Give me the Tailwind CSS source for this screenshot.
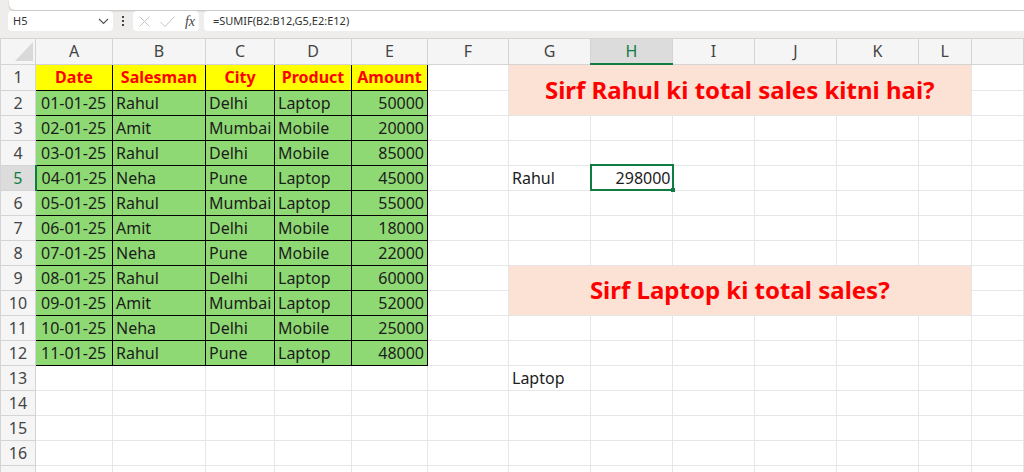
<!doctype html>
<html>
<head>
<meta charset="utf-8">
<title>SUMIF</title>
<script src="https://cdn.jsdelivr.net/npm/@tailwindcss/browser@4"></script>
</head>
<body class="h-[472px] overflow-hidden bg-[#efedeb] font-['Noto_Sans',sans-serif] text-[#1c1c1c]">

<!-- ribbon edge -->
<div class="ml-[9px] h-[10px] rounded-bl-md bg-white shadow-[0_1px_2px_rgba(0,0,0,0.2)]"></div>

<!-- formula bar -->
<div class="mt-[1px] flex h-[20px] items-stretch pl-[8px]">
    <div class="flex w-[105px] items-center justify-between rounded bg-white pl-[5px] pr-[4px] text-[11px] text-[#333]">
        <span>H5</span>
        <svg class="w-[11px] h-[7px]" viewBox="0 0 11 7" fill="none" stroke="#555" stroke-width="1.2"><path d="M1 1l4.5 4.5L10 1"/></svg>
    </div>
    <div class="flex w-[20px] flex-col items-center justify-center gap-[2px]">
        <span class="h-[2px] w-[2px] bg-[#444]"></span>
        <span class="h-[2px] w-[2px] bg-[#444]"></span>
        <span class="h-[2px] w-[2px] bg-[#444]"></span>
    </div>
    <div class="flex w-[66px] items-center justify-between rounded bg-white pl-[6px] pr-[4px]">
        <svg class="w-[11px] h-[11px]" viewBox="0 0 11 11" fill="none" stroke="#c4c4c4" stroke-width="1"><path d="M0.5 0.5l10 10M10.5 0.5l-10 10"/></svg>
        <svg class="w-[15px] h-[11px]" viewBox="0 0 15 11" fill="none" stroke="#c4c4c4" stroke-width="1"><path d="M0.5 6l4.5 4.5L14.5 0.5"/></svg>
        <span class="font-['Liberation_Serif',serif] text-[14px] italic text-[#444]">fx</span>
    </div>
    <div class="ml-[5px] flex flex-1 items-center rounded-l bg-white pl-[9px] text-[11px] text-[#333]">=SUMIF(B2:B12,G5,E2:E12)</div>
</div>
<div class="h-[7px]"></div>

<!-- sheet -->
<table class="w-[1024px] table-fixed border-collapse bg-white text-[16px] [&_td]:border [&_td]:border-[#e6e6e6] [&_td]:p-0 [&_td]:leading-none [&_th]:border [&_th]:border-[#d4d4d4] [&_th]:bg-[#f5f5f5] [&_th]:font-normal [&_th]:text-[#444] [&_th]:p-0">
    <colgroup>
        <col class="w-[35px]"><col class="w-[77px]"><col class="w-[93px]"><col class="w-[69px]"><col class="w-[77px]"><col class="w-[76px]"><col class="w-[81px]"><col class="w-[82px]"><col class="w-[82px]"><col class="w-[82px]"><col class="w-[82px]"><col class="w-[82px]"><col>
    </colgroup>
    <thead>
        <tr class="h-[25px]">
            <th><svg class="ml-[14px] w-[18px] h-[19px]" viewBox="0 0 18 19"><path d="M18 0v19H0z" fill="#d9d9d9"/></svg></th>
            <th>A</th><th>B</th><th>C</th><th>D</th><th>E</th><th>F</th><th>G</th>
            <th class="bg-[#dcdcdc]! text-[#107c41]! border-b-2! border-b-[#107c41]!">H</th>
            <th>I</th><th>J</th><th>K</th><th>L</th><th></th>
        </tr>
    </thead>
    <tbody>
        <tr class="h-[26px]">
            <th>1</th>
            <td class="border-black! bg-[#ffff00] text-center font-bold text-[#ff0000]">Date</td>
            <td class="border-black! bg-[#ffff00] text-center font-bold text-[#ff0000]">Salesman</td>
            <td class="border-black! bg-[#ffff00] text-center font-bold text-[#ff0000]">City</td>
            <td class="border-black! bg-[#ffff00] text-center font-bold text-[#ff0000]">Product</td>
            <td class="border-black! bg-[#ffff00] text-center font-bold text-[#ff0000]">Amount</td>
            <td></td>
            <td colspan="6" rowspan="2" class="border-0! bg-[#fbe2d5] text-center text-[24px] font-bold text-[#ff0000]">Sirf Rahul ki total sales kitni hai?</td>
            <td></td>
        </tr>
        <tr class="h-[24.9px]">
            <th>2</th>
            <td class="border-black! bg-[#8ed973] pl-[5px]!">01-01-25</td>
            <td class="border-black! bg-[#8ed973] pl-[3px]!">Rahul</td>
            <td class="border-black! bg-[#8ed973] pl-[3px]!">Delhi</td>
            <td class="border-black! bg-[#8ed973] pl-[3px]!">Laptop</td>
            <td class="border-black! bg-[#8ed973] pr-[3px]! text-right">50000</td>
            <td></td><td></td>
        </tr>
        <tr class="h-[24.9px]">
            <th>3</th>
            <td class="border-black! bg-[#8ed973] pl-[5px]!">02-01-25</td>
            <td class="border-black! bg-[#8ed973] pl-[3px]!">Amit</td>
            <td class="border-black! bg-[#8ed973] pl-[3px]!">Mumbai</td>
            <td class="border-black! bg-[#8ed973] pl-[3px]!">Mobile</td>
            <td class="border-black! bg-[#8ed973] pr-[3px]! text-right">20000</td>
            <td></td><td></td><td></td><td></td><td></td><td></td><td></td><td></td>
        </tr>
        <tr class="h-[24.9px]">
            <th>4</th>
            <td class="border-black! bg-[#8ed973] pl-[5px]!">03-01-25</td>
            <td class="border-black! bg-[#8ed973] pl-[3px]!">Rahul</td>
            <td class="border-black! bg-[#8ed973] pl-[3px]!">Delhi</td>
            <td class="border-black! bg-[#8ed973] pl-[3px]!">Mobile</td>
            <td class="border-black! bg-[#8ed973] pr-[3px]! text-right">85000</td>
            <td></td><td></td><td></td><td></td><td></td><td></td><td></td><td></td>
        </tr>
        <tr class="h-[24.9px]">
            <th class="bg-[#dcdcdc]! text-[#107c41]! border-r-2! border-r-[#107c41]!">5</th>
            <td class="border-black! bg-[#8ed973] pl-[5px]!">04-01-25</td>
            <td class="border-black! bg-[#8ed973] pl-[3px]!">Neha</td>
            <td class="border-black! bg-[#8ed973] pl-[3px]!">Pune</td>
            <td class="border-black! bg-[#8ed973] pl-[3px]!">Laptop</td>
            <td class="border-black! bg-[#8ed973] pr-[3px]! text-right">45000</td>
            <td></td>
            <td class="pl-[3px]!">Rahul</td>
            <td class="relative border-2! border-[#107c41]! pr-[1px]! text-right">298000<span class="absolute -right-[3px] -bottom-[3px] h-[4px] w-[4px] bg-[#107c41]"></span></td>
            <td></td><td></td><td></td><td></td><td></td>
        </tr>
        <tr class="h-[24.9px]">
            <th>6</th>
            <td class="border-black! bg-[#8ed973] pl-[5px]!">05-01-25</td>
            <td class="border-black! bg-[#8ed973] pl-[3px]!">Rahul</td>
            <td class="border-black! bg-[#8ed973] pl-[3px]!">Mumbai</td>
            <td class="border-black! bg-[#8ed973] pl-[3px]!">Laptop</td>
            <td class="border-black! bg-[#8ed973] pr-[3px]! text-right">55000</td>
            <td></td><td></td><td></td><td></td><td></td><td></td><td></td><td></td>
        </tr>
        <tr class="h-[24.9px]">
            <th>7</th>
            <td class="border-black! bg-[#8ed973] pl-[5px]!">06-01-25</td>
            <td class="border-black! bg-[#8ed973] pl-[3px]!">Amit</td>
            <td class="border-black! bg-[#8ed973] pl-[3px]!">Delhi</td>
            <td class="border-black! bg-[#8ed973] pl-[3px]!">Mobile</td>
            <td class="border-black! bg-[#8ed973] pr-[3px]! text-right">18000</td>
            <td></td><td></td><td></td><td></td><td></td><td></td><td></td><td></td>
        </tr>
        <tr class="h-[24.9px]">
            <th>8</th>
            <td class="border-black! bg-[#8ed973] pl-[5px]!">07-01-25</td>
            <td class="border-black! bg-[#8ed973] pl-[3px]!">Neha</td>
            <td class="border-black! bg-[#8ed973] pl-[3px]!">Pune</td>
            <td class="border-black! bg-[#8ed973] pl-[3px]!">Mobile</td>
            <td class="border-black! bg-[#8ed973] pr-[3px]! text-right">22000</td>
            <td></td><td></td><td></td><td></td><td></td><td></td><td></td><td></td>
        </tr>
        <tr class="h-[24.9px]">
            <th>9</th>
            <td class="border-black! bg-[#8ed973] pl-[5px]!">08-01-25</td>
            <td class="border-black! bg-[#8ed973] pl-[3px]!">Rahul</td>
            <td class="border-black! bg-[#8ed973] pl-[3px]!">Delhi</td>
            <td class="border-black! bg-[#8ed973] pl-[3px]!">Laptop</td>
            <td class="border-black! bg-[#8ed973] pr-[3px]! text-right">60000</td>
            <td></td>
            <td colspan="6" rowspan="2" class="border-0! bg-[#fbe2d5] text-center text-[24px] font-bold text-[#ff0000]">Sirf Laptop ki total sales?</td>
            <td></td>
        </tr>
        <tr class="h-[24.9px]">
            <th>10</th>
            <td class="border-black! bg-[#8ed973] pl-[5px]!">09-01-25</td>
            <td class="border-black! bg-[#8ed973] pl-[3px]!">Amit</td>
            <td class="border-black! bg-[#8ed973] pl-[3px]!">Mumbai</td>
            <td class="border-black! bg-[#8ed973] pl-[3px]!">Laptop</td>
            <td class="border-black! bg-[#8ed973] pr-[3px]! text-right">52000</td>
            <td></td><td></td>
        </tr>
        <tr class="h-[24.9px]">
            <th>11</th>
            <td class="border-black! bg-[#8ed973] pl-[5px]!">10-01-25</td>
            <td class="border-black! bg-[#8ed973] pl-[3px]!">Neha</td>
            <td class="border-black! bg-[#8ed973] pl-[3px]!">Delhi</td>
            <td class="border-black! bg-[#8ed973] pl-[3px]!">Mobile</td>
            <td class="border-black! bg-[#8ed973] pr-[3px]! text-right">25000</td>
            <td></td><td></td><td></td><td></td><td></td><td></td><td></td><td></td>
        </tr>
        <tr class="h-[24.9px]">
            <th>12</th>
            <td class="border-black! bg-[#8ed973] pl-[5px]!">11-01-25</td>
            <td class="border-black! bg-[#8ed973] pl-[3px]!">Rahul</td>
            <td class="border-black! bg-[#8ed973] pl-[3px]!">Pune</td>
            <td class="border-black! bg-[#8ed973] pl-[3px]!">Laptop</td>
            <td class="border-black! bg-[#8ed973] pr-[3px]! text-right">48000</td>
            <td></td><td></td><td></td><td></td><td></td><td></td><td></td><td></td>
        </tr>
        <tr class="h-[24.9px]">
            <th>13</th><td></td><td></td><td></td><td></td><td></td><td></td>
            <td class="pl-[3px]!">Laptop</td><td></td><td></td><td></td><td></td><td></td><td></td>
        </tr>
        <tr class="h-[24.9px]"><th>14</th><td></td><td></td><td></td><td></td><td></td><td></td><td></td><td></td><td></td><td></td><td></td><td></td><td></td></tr>
        <tr class="h-[24.9px]"><th>15</th><td></td><td></td><td></td><td></td><td></td><td></td><td></td><td></td><td></td><td></td><td></td><td></td><td></td></tr>
        <tr class="h-[24.9px]"><th>16</th><td></td><td></td><td></td><td></td><td></td><td></td><td></td><td></td><td></td><td></td><td></td><td></td><td></td></tr>
        <tr class="h-[24.9px]"><th>17</th><td></td><td></td><td></td><td></td><td></td><td></td><td></td><td></td><td></td><td></td><td></td><td></td><td></td></tr>
    </tbody>
</table>
</body>
</html>
